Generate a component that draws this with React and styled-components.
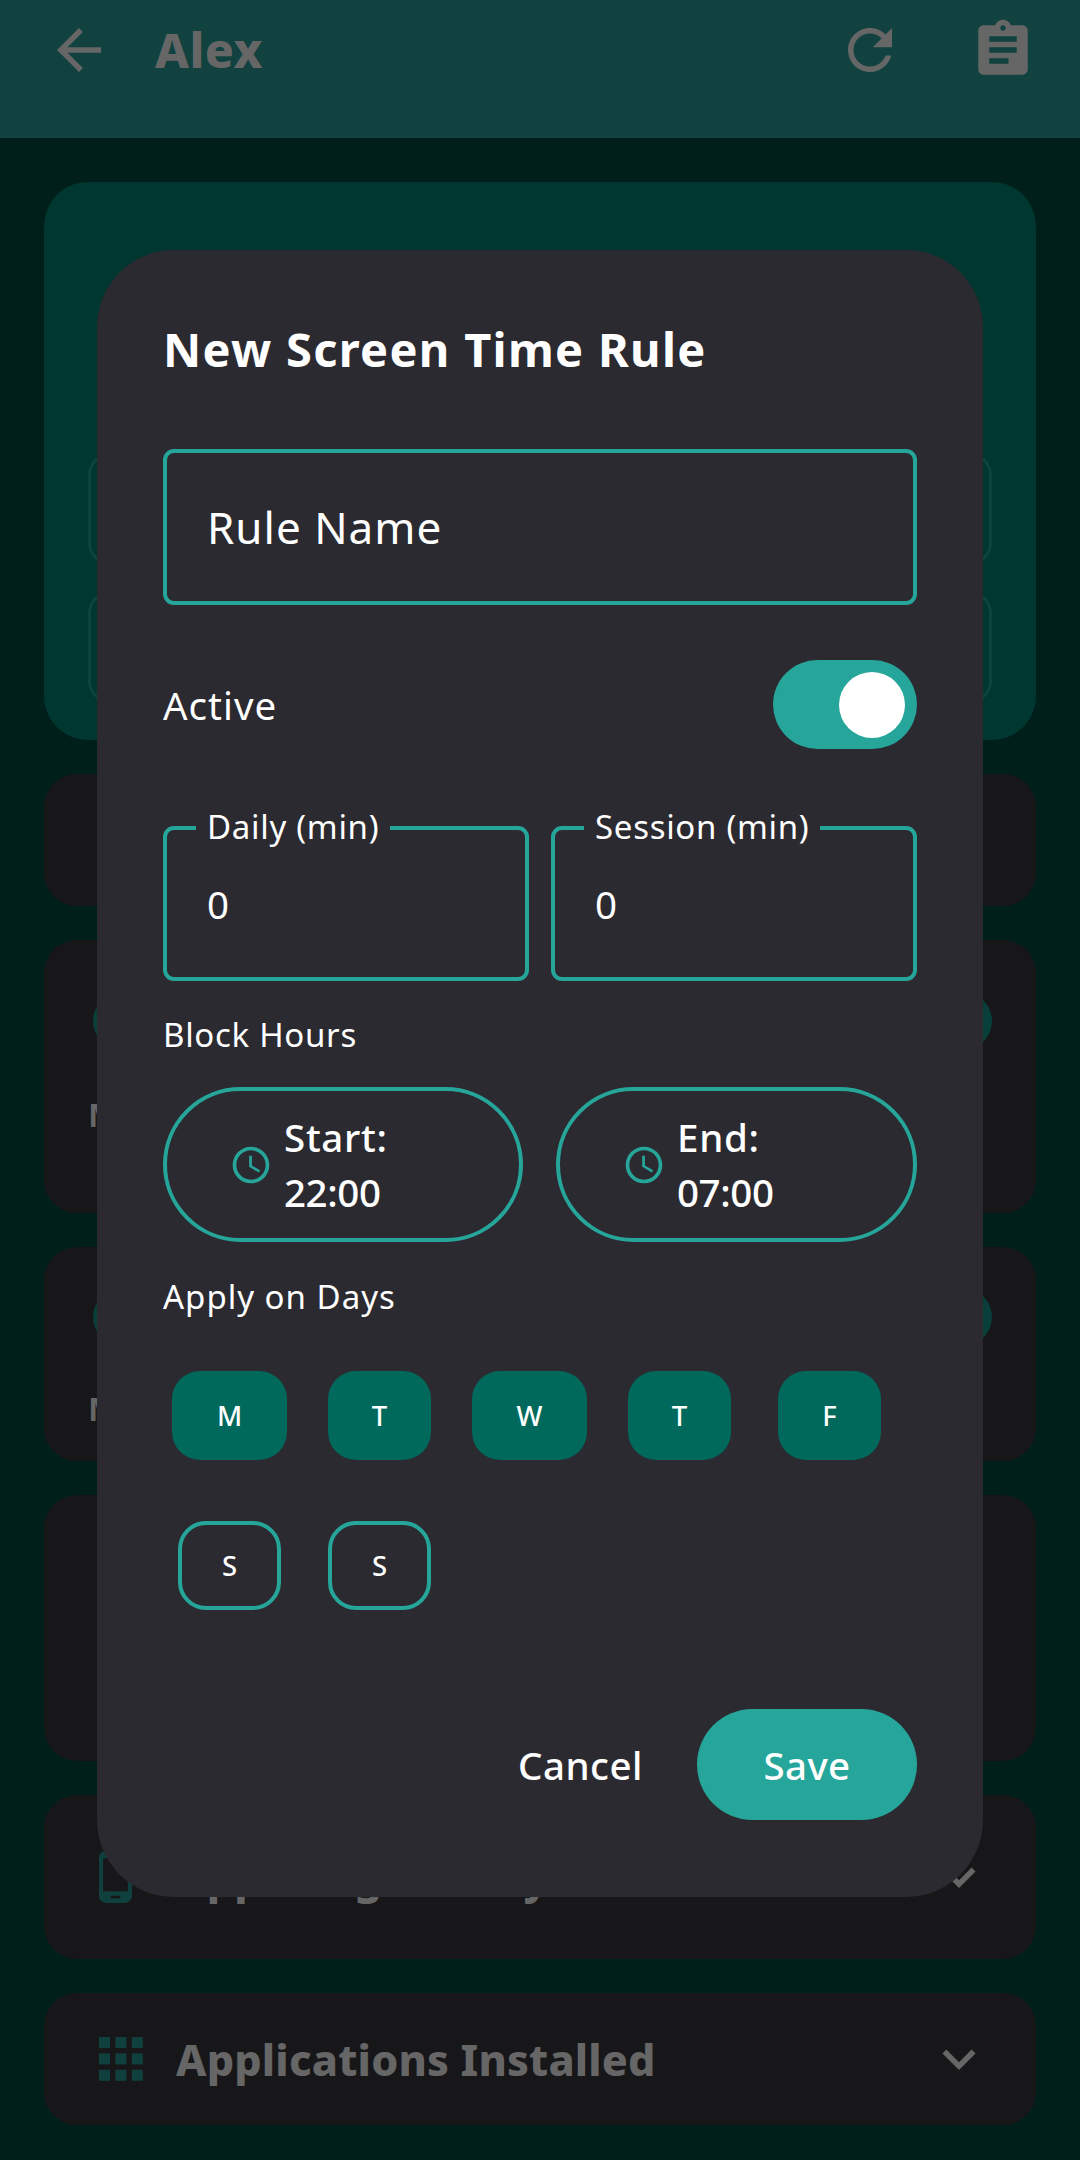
import React from "react";
import styled, { createGlobalStyle } from "styled-components";

const GlobalStyle = createGlobalStyle`
  html, body {
    margin: 0;
    padding: 0;
    background: #001f1b;
  }
  * {
    box-sizing: border-box;
  }
`;

const Screen = styled.div`
  position: relative;
  width: 1080px;
  height: 2160px;
  overflow: hidden;
  background: #001f1b;
  font-family: "Noto Sans", "Open Sans", sans-serif;
  color: #fff;
`;

const AppBar = styled.header`
  height: 138px;
  background: #11423f;
  display: flex;
  align-items: flex-start;
  padding: 17px 44px 0 35px;
  color: #666;
`;

const BarIcon = styled.svg`
  width: 66px;
  height: 66px;
  fill: #666;
  flex: none;
`;

const BackIcon = styled(BarIcon)`
  margin-left: 11px;
`;

const BarTitle = styled.h1`
  flex: 1;
  margin: 0 0 0 43px;
  font-size: 48px;
  line-height: 66px;
  font-weight: 800;
  letter-spacing: 0.5px;
`;

const BarActions = styled.div`
  display: flex;
  gap: 67px;
`;

const Content = styled.main`
  display: flex;
  flex-direction: column;
  gap: 34px;
  padding: 44px 44px 0;
`;

const HeroCard = styled.section`
  height: 558px;
  border-radius: 44px;
  background: #003730;
  padding: 271px 44px 0;
  display: flex;
  flex-direction: column;
  gap: 26px;
`;

const HeroField = styled.div`
  height: 112px;
  border: 3px solid #0e443e;
  border-radius: 22px;
`;

const Card = styled.section`
  height: ${(p) => p.$h}px;
  border-radius: 33px;
  background: #171719;
  padding: ${(p) => p.$pt || 0}px 44px 0 44px;
  color: #666;
`;

const LimitPill = styled.div`
  height: 58px;
  border-radius: 29px;
  background: #083f3b;
  margin: 0 0 ${(p) => p.$mb}px 5px;
`;

const LimitText = styled.div`
  font-size: 33px;
  line-height: 33px;
  font-weight: 700;
`;

const SectionRow = styled.div`
  height: 100%;
  display: flex;
  align-items: center;
  padding-left: 11px;
`;

const SectionIconBox = styled.div`
  width: 77px;
  flex: none;
  display: flex;
  align-items: center;
`;

const SectionTitle = styled.h2`
  flex: 1;
  margin: 0;
  font-size: 43px;
  font-weight: 800;
  letter-spacing: 0.2px;
`;

const Chevron = styled.svg`
  width: 66px;
  height: 66px;
  fill: #666;
  flex: none;
`;

const Dialog = styled.div`
  position: absolute;
  left: 97px;
  top: 250px;
  width: 886px;
  height: 1647px;
  border-radius: 77px;
  background: #2b2a30;
  padding: 66px;
  display: flex;
  flex-direction: column;
`;

const DialogTitle = styled.h2`
  margin: 3px 0 0;
  font-size: 47px;
  line-height: 60px;
  font-weight: 700;
  letter-spacing: 1.3px;
`;

const NameField = styled.div`
  margin-top: 70px;
  height: 156px;
  border: 4px solid #26a69a;
  border-radius: 11px;
  padding-left: 40px;
  display: flex;
  align-items: center;
  font-size: 44px;
  letter-spacing: 1px;
`;

const ActiveRow = styled.div`
  margin-top: 55px;
  display: flex;
  justify-content: space-between;
  align-items: center;
  font-size: 38.5px;
  letter-spacing: 1px;
`;

const Toggle = styled.div`
  width: 144px;
  height: 89px;
  border-radius: 45px;
  background: #26a69a;
  display: flex;
  align-items: center;
  justify-content: flex-end;
  padding-right: 12px;
`;

const Thumb = styled.div`
  width: 66px;
  height: 66px;
  border-radius: 50%;
  background: #fff;
`;

const LimitRow = styled.div`
  margin-top: 77px;
  display: grid;
  grid-template-columns: 1fr 1fr;
  gap: 22px;
`;

const LimitField = styled.div`
  position: relative;
  height: 155px;
  border: 4px solid #26a69a;
  border-radius: 11px;
  padding-left: 40px;
  display: flex;
  align-items: center;
  font-size: 38.5px;
`;

const LimitLabel = styled.span`
  position: absolute;
  left: 29px;
  top: -26px;
  padding: 0 11px;
  background: #2b2a30;
  font-size: 33px;
  line-height: 45px;
  letter-spacing: 0.7px;
`;

const GroupLabel = styled.div`
  font-size: 33px;
  line-height: 45px;
  letter-spacing: ${(p) => p.$ls}px;
  margin-top: ${(p) => p.$mt}px;
`;

const HourRow = styled.div`
  margin-top: 30px;
  display: flex;
  justify-content: space-between;
`;

const HourPill = styled.div`
  width: ${(p) => p.$w}px;
  height: 155px;
  border: 4px solid #26a69a;
  border-radius: 78px;
  display: flex;
  align-items: center;
  padding-left: 62px;
  gap: 11px;
`;

const ClockIcon = styled.svg`
  width: 44px;
  height: 44px;
  fill: #26a69a;
  flex: none;
`;

const HourText = styled.div`
  font-size: 38.5px;
  line-height: 55px;
  font-weight: 500;
`;

const HourName = styled.div`
  letter-spacing: 0.7px;
`;

const HourValue = styled.div`
  letter-spacing: -0.4px;
`;

const DayGrid = styled.div`
  margin: 52px 0 0 -8.5px;
  display: grid;
  grid-template-columns: repeat(5, 150px);
  row-gap: 61px;
  justify-items: center;
`;

const DayChip = styled.div`
  min-width: 103px;
  height: 89px;
  padding: 0 ${(p) => (p.$wide ? 41 : 30)}px;
  border-radius: 28px;
  border: 4px solid ${(p) => (p.$on ? "transparent" : "#26a69a")};
  background: ${(p) => (p.$on ? "#00695c" : "transparent")};
  background-clip: ${(p) => (p.$on ? "border-box" : "padding-box")};
  display: flex;
  align-items: center;
  justify-content: center;
  font-size: 27.5px;
  font-weight: 500;
`;

const DialogActions = styled.div`
  margin-top: auto;
  margin-bottom: 11px;
  display: flex;
  align-items: center;
  justify-content: flex-end;
  gap: 54px;
`;

const TextButton = styled.button`
  border: 0;
  padding: 0;
  background: none;
  color: #fff;
  font: 500 38.5px "Noto Sans", sans-serif;
  letter-spacing: 0.5px;
`;

const SaveButton = styled.button`
  width: 220px;
  height: 111px;
  border: 0;
  border-radius: 56px;
  background: #26a69a;
  color: #fff;
  font: 500 38.5px "Noto Sans", sans-serif;
  letter-spacing: 0.4px;
`;

const days = [
  { id: "mon", label: "M", on: true, wide: true },
  { id: "tue", label: "T", on: true },
  { id: "wed", label: "W", on: true, wide: true },
  { id: "thu", label: "T", on: true },
  { id: "fri", label: "F", on: true },
  { id: "sat", label: "S" },
  { id: "sun", label: "S" },
];

const ExpandIcon = () => (
  <Chevron viewBox="0 0 24 24">
    <path d="M16.59 8.59L12 13.17 7.41 8.59 6 10l6 6 6-6z" />
  </Chevron>
);

const Clock = () => (
  <ClockIcon viewBox="0 0 24 24">
    <path d="M11.99 2C6.47 2 2 6.48 2 12s4.47 10 9.99 10C17.52 22 22 17.52 22 12S17.52 2 11.99 2zM12 20c-4.42 0-8-3.58-8-8s3.58-8 8-8 8 3.58 8 8-3.58 8-8 8zm.5-13H11v6l5.25 3.15.75-1.23-4.5-2.67z" />
  </ClockIcon>
);

export default function App() {
  return (
    <Screen>
      <GlobalStyle />
      <AppBar>
        <BackIcon viewBox="0 0 24 24">
          <path d="M20 11H7.83l5.59-5.59L12 4l-8 8 8 8 1.41-1.41L7.83 13H20v-2z" />
        </BackIcon>
        <BarTitle>Alex</BarTitle>
        <BarActions>
          <BarIcon viewBox="0 0 24 24">
            <path d="M17.65 6.35C16.2 4.9 14.21 4 12 4c-4.42 0-7.99 3.58-7.99 8s3.57 8 7.99 8c3.73 0 6.84-2.55 7.73-6h-2.08c-.82 2.33-3.04 4-5.65 4-3.31 0-6-2.69-6-6s2.69-6 6-6c1.66 0 3.14.69 4.22 1.78L13 11h7V4l-2.35 2.35z" />
          </BarIcon>
          <BarIcon viewBox="0 0 24 24">
            <path d="M19 3h-4.18C14.4 1.84 13.3 1 12 1c-1.3 0-2.4.84-2.82 2H5c-1.1 0-2 .9-2 2v14c0 1.1.9 2 2 2h14c1.1 0 2-.9 2-2V5c0-1.1-.9-2-2-2zm-7 0c.55 0 1 .45 1 1s-.45 1-1 1-1-.45-1-1 .45-1 1-1zm2 14H7v-2h7v2zm3-4H7v-2h10v2zm0-4H7V7h10v2z" />
          </BarIcon>
        </BarActions>
      </AppBar>

      <Content>
        <HeroCard>
          <HeroField />
          <HeroField />
        </HeroCard>
        <Card $h={132} />
        <Card $h={273} $pt={52}>
          <LimitPill $mb={48} />
          <LimitText>Mon</LimitText>
        </Card>
        <Card $h={214} $pt={41}>
          <LimitPill $mb={46} />
          <LimitText>Mon</LimitText>
        </Card>
        <Card $h={266} />
        <Card $h={164}>
          <SectionRow>
            <SectionIconBox>
              <svg width="33" height="52" viewBox="5 1 14 22" fill="#10403e">
                <path d="M16 1H8C6.34 1 5 2.34 5 4v16c0 1.66 1.34 3 3 3h8c1.66 0 3-1.34 3-3V4c0-1.66-1.34-3-3-3zm-2 20h-4v-1h4v1zm3.25-3H6.75V4h10.5v14z" />
              </svg>
            </SectionIconBox>
            <SectionTitle>App Usage Today</SectionTitle>
            <ExpandIcon />
          </SectionRow>
        </Card>
        <Card $h={132}>
          <SectionRow>
            <SectionIconBox>
              <svg width="44" height="44" viewBox="0 0 44 44" fill="#10403e">
                {[0, 16.4, 32.8].map((y) =>
                  [0, 16.4, 32.8].map((x) => <rect key={`${x}-${y}`} x={x} y={y} width="11" height="11" />)
                )}
              </svg>
            </SectionIconBox>
            <SectionTitle>Applications Installed</SectionTitle>
            <ExpandIcon />
          </SectionRow>
        </Card>
      </Content>

      <Dialog>
        <DialogTitle>New Screen Time Rule</DialogTitle>
        <NameField>Rule Name</NameField>
        <ActiveRow>
          <span>Active</span>
          <Toggle>
            <Thumb />
          </Toggle>
        </ActiveRow>
        <LimitRow>
          <LimitField>
            <LimitLabel>Daily (min)</LimitLabel>0
          </LimitField>
          <LimitField>
            <LimitLabel>Session (min)</LimitLabel>0
          </LimitField>
        </LimitRow>
        <GroupLabel $mt={31} $ls={0.7}>Block Hours</GroupLabel>
        <HourRow>
          <HourPill $w={360}>
            <Clock />
            <HourText>
              <HourName>Start:</HourName>
              <HourValue>22:00</HourValue>
            </HourText>
          </HourPill>
          <HourPill $w={361}>
            <Clock />
            <HourText>
              <HourName>End:</HourName>
              <HourValue>07:00</HourValue>
            </HourText>
          </HourPill>
        </HourRow>
        <GroupLabel $mt={32} $ls={1}>Apply on Days</GroupLabel>
        <DayGrid>
          {days.map((d) => (
            <DayChip key={d.id} $on={d.on} $wide={d.wide}>
              {d.label}
            </DayChip>
          ))}
        </DayGrid>
        <DialogActions>
          <TextButton>Cancel</TextButton>
          <SaveButton>Save</SaveButton>
        </DialogActions>
      </Dialog>
    </Screen>
  );
}
